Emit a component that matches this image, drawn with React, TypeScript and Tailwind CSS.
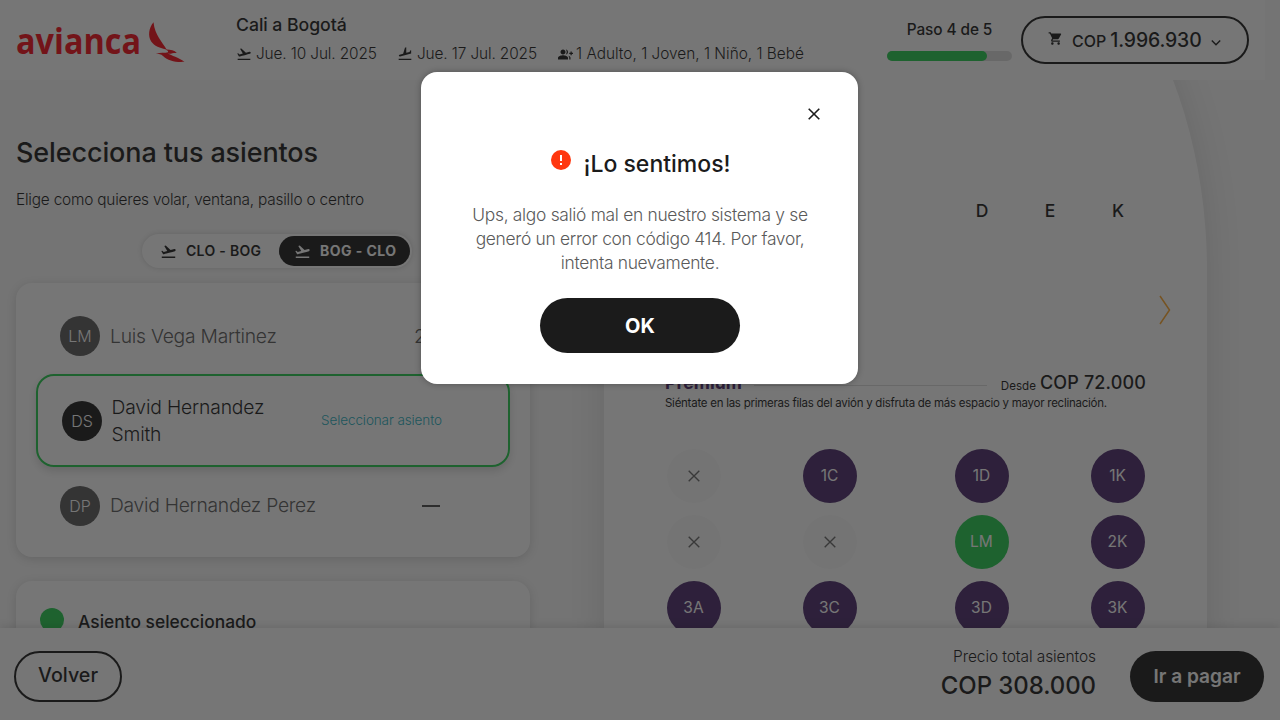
import { MdFlightTakeoff, MdFlightLand, MdGroupAdd, MdShoppingCart } from "react-icons/md";

function AviancaLogo() {
  return (
    <svg width="176" height="50" viewBox="0 0 176 50" className="block text-[#f80c18]" aria-label="avianca">
      <text
        x="0"
        y="38.3"
        fontFamily="'Open Sans', sans-serif"
        fontWeight="700"
        fontSize="36"
        textLength="125"
        lengthAdjust="spacingAndGlyphs"
        fill="currentColor"
      >
        avianca
      </text>
      <path
        d="M137.5 6.3 C132.6 12 131.8 20 135.2 25.4 C138.2 30 144 32 150.6 33.4 C146 25.5 139 19.5 137.5 6.3 Z M149.5 33.6 C153.5 33.4 158.5 34.2 160.8 37 C157.5 36.6 155.5 38 152 37.6 C155.5 39.5 162.5 41.8 168.5 45.8 C159.5 46.4 152 44.8 147 39.9 C145 38.2 143 38.2 139.8 37.6 C144 36.6 149 37 152 36.2 C152.5 35.4 151.5 34.4 149.5 33.6 Z"
        fill="currentColor"
      />
    </svg>
  );
}

function Cross({ className }: { className: string }) {
  return (
    <svg viewBox="0 0 12 12" className={className} fill="none" stroke="currentColor">
      <path d="M.7.7 11.3 11.3M11.3.7.7 11.3" />
    </svg>
  );
}

function Header() {
  return (
    <header className="relative z-10 flex h-20 w-[1265px] shrink-0 bg-white pl-4">
      <div className="w-[220px] pt-4">
        <AviancaLogo />
      </div>
      <div className="w-[651px] pt-[13px]">
        <p className="text-[17.7px] leading-6 font-medium tracking-[-0.06px]">Cali a Bogotá</p>
        <div className="mt-[5px] flex h-6 items-center text-[15.4px] font-light whitespace-nowrap">
          <MdFlightTakeoff className="mr-1 size-4" />
          <span className="w-[141px] tracking-[-0.12px]">Jue. 10 Jul. 2025</span>
          <MdFlightLand className="mr-1 size-4 -scale-x-100" />
          <span className="w-[141px] tracking-[-0.12px]">Jue. 17 Jul. 2025</span>
          <MdGroupAdd className="mr-[3px] size-[15px]" />
          <span>1 Adulto, 1 Joven, 1 Niño, 1 Bebé</span>
        </div>
      </div>
      <div className="w-[125px] pt-[18px]">
        <p className="text-center text-[15.4px] leading-6 font-medium tracking-[-0.1px]">Paso 4 de 5</p>
        <div className="mt-[9px] h-2.5 rounded-full bg-[#dddddd]">
          <div className="h-full w-4/5 rounded-full bg-[#24cd4e]" />
        </div>
      </div>
      <div className="mt-4 ml-[9px] flex h-12 w-[228px] items-center rounded-full border-2 border-[#1b1b1b] pl-[25px]">
        <MdShoppingCart className="mb-1 size-[15px]" />
        <span className="mt-0.5 ml-[9px] text-base font-medium">COP</span>
        <span className="mt-0.5 ml-1 text-[19.4px] font-medium tracking-[-0.12px]">1.996.930</span>
        <svg viewBox="0 0 10 6" className="mt-1.5 ml-[9px] h-1.5 w-2.5" fill="none" stroke="currentColor" strokeWidth="1.4">
          <path d="M.8.6 5 4.8 9.2.6" />
        </svg>
      </div>
    </header>
  );
}

function Avatar({ initials, active }: { initials: string; active?: boolean }) {
  return (
    <span
      className={
        active
          ? "flex size-10 shrink-0 items-center justify-center rounded-full bg-[#1b1b1b] text-base text-white"
          : "flex size-10 shrink-0 items-center justify-center rounded-full bg-[#5a5a5a] text-base text-white"
      }
    >
      {initials}
    </span>
  );
}

function Sidebar() {
  return (
    <section className="w-[604px] shrink-0 pl-4">
      <h1 className="pt-[53px] text-[27px] leading-10 font-medium tracking-[-0.12px]">Selecciona tus asientos</h1>
      <p className="mt-[15px] text-[15.4px] leading-6 font-light tracking-[-0.2px]">
        Elige como quieres volar, ventana, pasillo o centro
      </p>
      <div className="mt-[22px] ml-[126px] flex h-[34px] w-[270px] items-center rounded-full bg-white p-0.5 text-sm whitespace-nowrap shadow-[0_0_5px_rgba(0,0,0,0.16)]">
        <div className="flex w-[135px] items-center pl-4 font-semibold tracking-[0.3px]">
          <MdFlightTakeoff className="mr-[9px] size-[17px]" />
          CLO - BOG
        </div>
        <div className="flex h-[30px] flex-1 items-center rounded-full bg-[#1b1b1b] pl-[15px] font-bold tracking-[0.45px] text-white">
          <MdFlightTakeoff className="mr-[9px] size-[17px]" />
          BOG - CLO
        </div>
      </div>

      <div className="mt-[15px] h-[274px] w-[514px] rounded-2xl bg-white px-5 pt-[15px] shadow-[0_2px_10px_rgba(0,0,0,0.15)]">
        <div className="flex h-[76px] items-center pl-6 text-[19.3px] font-light text-[#5a5a5a]">
          <Avatar initials="LM" />
          <span className="ml-2.5 w-[304px] tracking-[-0.24px]">Luis Vega Martinez</span>
          <span>2D</span>
        </div>
        <div className="flex h-[93px] items-center rounded-[18px] border-2 border-[#24cd4e] pl-6 text-[19.3px] leading-[27px] font-light shadow-[0_4px_8px_rgba(0,0,0,0.15)]">
          <Avatar initials="DS" active />
          <span className="ml-[9.5px] w-[209.5px] tracking-[-0.16px]">
            David Hernandez
            <br />
            Smith
          </span>
          <span className="text-[13.5px] tracking-[-0.1px] text-[#1fb0c0]">Seleccionar asiento</span>
        </div>
        <div className="flex h-[77px] items-center pl-6 text-[19.3px] font-light text-[#5a5a5a]">
          <Avatar initials="DP" />
          <span className="ml-2.5 w-[312px] tracking-[-0.28px]">David Hernandez Perez</span>
          <span className="h-0.5 w-[18px] bg-[#4a4a4a]" />
        </div>
      </div>

      <div className="mt-6 flex h-24 w-[514px] rounded-2xl bg-white pt-[27px] pl-6 shadow-[0_2px_10px_rgba(0,0,0,0.15)]">
        <span className="size-6 rounded-full bg-[#24cd4e]" />
        <span className="mt-0.5 ml-3.5 text-[17.4px] leading-6 font-medium">Asiento seleccionado</span>
      </div>
    </section>
  );
}

type SeatInfo = { label: string; kind: "free" | "taken" | "mine" };

const seatRows: SeatInfo[][] = [
  [
    { label: "1A", kind: "taken" },
    { label: "1C", kind: "free" },
    { label: "1D", kind: "free" },
    { label: "1K", kind: "free" },
  ],
  [
    { label: "2A", kind: "taken" },
    { label: "2C", kind: "taken" },
    { label: "LM", kind: "mine" },
    { label: "2K", kind: "free" },
  ],
  [
    { label: "3A", kind: "free" },
    { label: "3C", kind: "free" },
    { label: "3D", kind: "free" },
    { label: "3K", kind: "free" },
  ],
];

function Seat({ label, kind }: SeatInfo) {
  if (kind === "taken") {
    return (
      <span className="flex size-[54px] items-center justify-center rounded-full bg-[#fbfbfb] text-[#686868]">
        <Cross className="size-3 stroke-[1.4]" />
      </span>
    );
  }
  return (
    <span
      className={
        kind === "mine"
          ? "flex size-[54px] items-center justify-center rounded-full bg-[#24cd4e] text-[15.5px] text-white"
          : "flex size-[54px] items-center justify-center rounded-full bg-[#4b2a6b] text-[15.5px] text-white"
      }
    >
      {label}
    </span>
  );
}

function Cabin() {
  return (
    <section className="-mt-[222px] h-[1100px] w-[603px] shrink-0 rounded-t-[301.5px_412px] bg-white px-[61px] pt-[341px] shadow-[0_0_36px_rgba(0,0,0,0.12)]">
      <div className="-mx-2 flex justify-end pr-0.5 text-[17.5px] leading-6 font-medium">
        <span className="w-[68px] text-center">D</span>
        <span className="w-[68px] text-center">E</span>
        <span className="w-[68px] text-center">K</span>
      </div>
      <div className="mt-[72px] -mr-[25px] flex justify-end">
        <svg viewBox="0 0 12 30" className="h-[30px] w-3" fill="none" stroke="#ffa82e" strokeWidth="1.5">
          <path d="M1 1 10.5 15 1 29" />
        </svg>
      </div>
      <div className="mt-[46px] flex h-6 w-[481px] items-center whitespace-nowrap">
        <span className="text-[17.7px] font-bold text-[#4b2a6b]">Premium</span>
        <span className="mt-1 ml-3 h-px flex-1 bg-[#dcdcdc]" />
        <span className="mt-2 ml-3.5 text-[11.6px]">Desde</span>
        <span className="ml-1 text-lg leading-6 font-medium tracking-[0.15px]">COP 72.000</span>
      </div>
      <p className="text-[11.5px] leading-4 tracking-[-0.26px] whitespace-nowrap">
        Siéntate en las primeras filas del avión y disfruta de más espacio y mayor reclinación.
      </p>
      <div className="mt-[37.5px] ml-[1.5px] flex w-[478px] flex-col gap-3">
        {seatRows.map((row, index) => (
          <div key={index} className="flex justify-between">
            <div className="flex gap-[82px]">
              <Seat {...row[0]} />
              <Seat {...row[1]} />
            </div>
            <div className="flex gap-[82px]">
              <Seat {...row[2]} />
              <Seat {...row[3]} />
            </div>
          </div>
        ))}
      </div>
    </section>
  );
}

function Footer() {
  return (
    <footer className="relative z-10 flex h-[92px] shrink-0 items-start bg-white pt-[23px] pr-4 pl-3.5 shadow-[0_-2px_8px_rgba(0,0,0,0.12)]">
      <button className="h-[51px] w-[108px] rounded-full border-2 border-[#1b1b1b] pb-0.5 text-[19.7px] font-medium">
        Volver
      </button>
      <div className="-mt-1.5 ml-auto text-right whitespace-nowrap">
        <p className="text-[15.5px] leading-6 font-light tracking-[-0.08px]">Precio total asientos</p>
        <p className="mt-px text-2xl leading-8 font-medium tracking-[-0.08px]">COP 308.000</p>
      </div>
      <button className="ml-[34px] h-[51px] w-[134px] rounded-full bg-[#1b1b1b] text-[19.1px] font-semibold text-white">
        Ir a pagar
      </button>
    </footer>
  );
}

function ErrorDialog() {
  return (
    <div className="absolute inset-0 z-20 flex items-start justify-center bg-[#1b1b1b]/60 pt-[72px]">
      <div
        role="dialog"
        className="mr-px flex h-[312px] w-[437px] flex-col items-center rounded-2xl bg-white shadow-[0_0_6px_rgba(0,0,0,0.3)]"
      >
        <button aria-label="Cerrar" className="mt-9 mr-[38px] self-end">
          <Cross className="size-3 stroke-[1.6]" />
        </button>
        <div className="mt-7 ml-[3px] flex h-8 items-center">
          <svg viewBox="0 0 20 20" className="mb-2 size-5">
            <circle cx="10" cy="10" r="10" fill="#ff370f" />
            <path d="M10 5v6M10 13v2" stroke="#fff" strokeWidth="2" />
          </svg>
          <h2 className="ml-3 text-[23px] font-medium">¡Lo sentimos!</h2>
        </div>
        <p className="mt-[23px] ml-px text-center text-[17.4px] leading-6 font-light tracking-[-0.3px] whitespace-nowrap text-[#5a5a5a]">
          Ups, algo salió mal en nuestro sistema y se
          <br />
          generó un error con código 414. Por favor,
          <br />
          intenta nuevamente.
        </p>
        <button className="mt-[23px] ml-px h-[55px] w-[200px] rounded-full bg-[#1b1b1b] text-xl font-bold text-white">
          OK
        </button>
      </div>
    </div>
  );
}

export default function App() {
  return (
    <div className="relative flex h-[720px] w-[1280px] flex-col overflow-hidden bg-[#f9f9f9] font-['Inter',sans-serif] text-[#1b1b1b]">
      <Header />
      <main className="flex min-h-0 flex-1 items-start overflow-hidden">
        <Sidebar />
        <Cabin />
      </main>
      <Footer />
      <ErrorDialog />
    </div>
  );
}
